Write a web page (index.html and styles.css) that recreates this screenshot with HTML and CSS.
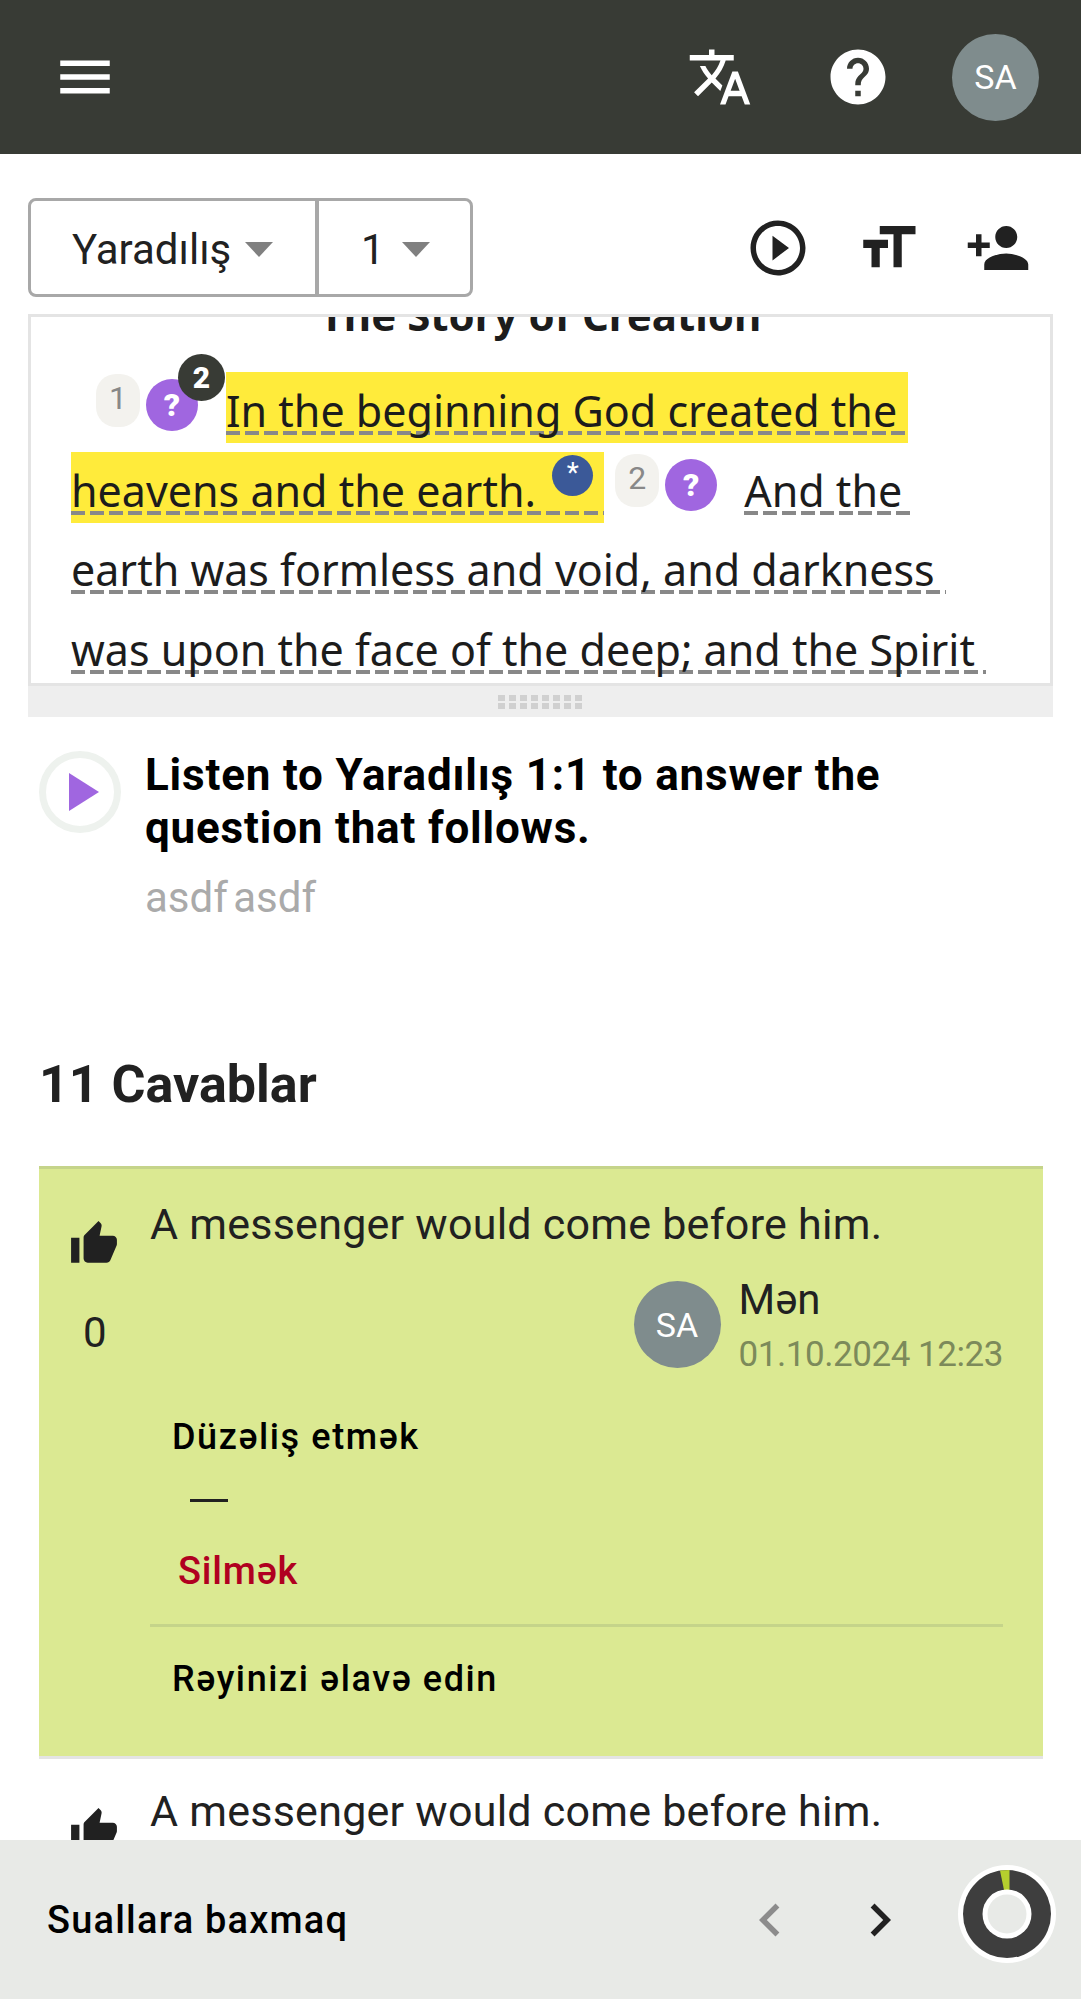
FILE: index.html
```html
<!DOCTYPE html>
<html lang="az">
<head>
  <meta charset="UTF-8">
  <meta name="viewport" content="width=device-width, initial-scale=1.0">
  <title>Yaradılış 1</title>
  <link rel="stylesheet" href="styles.css">
</head>
<body>
  <header class="topbar">
    <svg class="icon menu-icon" viewBox="0 0 24 24"><path d="M3 18h18v-2H3v2zm0-5h18v-2H3v2zm0-7v2h18V6H3z"/></svg>
    <svg class="icon translate-icon" viewBox="0 0 24 24"><path d="M12.87 15.07l-2.54-2.51.03-.03c1.74-1.94 2.98-4.17 3.71-6.53H17V4h-7V2H8v2H1v1.99h11.17C11.5 7.92 10.44 9.75 9 11.35 8.07 10.32 7.3 9.19 6.69 8h-2c.73 1.63 1.73 3.17 2.98 4.56l-5.09 5.02L4 19l5-5 3.11 3.11.76-2.04zM18.5 10h-2L12 22h2l1.12-3h4.75L21 22h2l-4.5-12zm-2.62 7l1.62-4.33L19.12 17h-3.24z"/></svg>
    <svg class="icon help-icon" viewBox="0 0 24 24"><path d="M12 2C6.48 2 2 6.48 2 12s4.48 10 10 10 10-4.48 10-10S17.52 2 12 2zm1 17h-2v-2h2v2zm2.07-7.75l-.9.92C13.45 12.9 13 13.5 13 15h-2v-.5c0-1.1.45-2.1 1.17-2.83l1.24-1.26c.37-.36.59-.86.59-1.41 0-1.1-.9-2-2-2s-2 .9-2 2H8c0-2.21 1.79-4 4-4s4 1.79 4 4c0 .88-.36 1.68-.93 2.25z"/></svg>
    <div class="avatar">SA</div>
  </header>

  <div class="toolbar">
    <div class="picker">
      <div class="picker-book">Yaradılış<span class="caret"></span></div>
      <div class="picker-chapter">1<span class="caret"></span></div>
    </div>
    <div class="tools">
      <svg class="icon" viewBox="0 0 24 24"><path d="M10 16.5l6-4.5-6-4.5v9zM12 2C6.48 2 2 6.48 2 12s4.48 10 10 10 10-4.48 10-10S17.52 2 12 2zm0 18c-4.41 0-8-3.59-8-8s3.59-8 8-8 8 3.59 8 8-3.59 8-8 8z"/></svg>
      <svg class="icon" viewBox="0 0 24 24"><path d="M9 4v3h5v12h3V7h5V4H9zm-6 8h3v7h3v-7h3V9H3v3z"/></svg>
      <svg class="icon" viewBox="0 0 24 24"><path d="M15 12c2.21 0 4-1.79 4-4s-1.79-4-4-4-4 1.79-4 4 1.79 4 4 4zm-9-2V7H4v3H1v2h3v3h2v-3h3v-2H6zm9 4c-2.67 0-8 1.34-8 4v2h16v-2c0-2.66-5.33-4-8-4z"/></svg>
    </div>
  </div>

  <section class="scripture">
    <h2 class="scripture-title">The Story of Creation</h2>
    <p class="verses">
      <span class="verse-num first">1</span><span class="q-mark">?<span class="q-count">2</span></span><span class="gap-a"></span><span class="word marked">In the beginning God created the&nbsp;</span><br>
      <span class="word marked">heavens and the earth.&nbsp;<span class="note">*</span></span><span class="verse-num">2</span><span class="q-mark">?</span><span class="gap-b"></span><span class="word">And the&nbsp;</span><br>
      <span class="word">earth was formless and void, and darkness&nbsp;</span><br>
      <span class="word">was upon the face of the deep; and the Spirit&nbsp;</span>
    </p>
  </section>
  <div class="resizer"><span class="grip"></span></div>

  <section class="question">
    <div class="audio-btn"><span class="audio-tri"></span></div>
    <div class="question-body">
      <h3>Listen to Yaradılış 1:1 to answer the question that follows.</h3>
      <p>asdf asdf</p>
    </div>
  </section>

  <h2 class="answers-head">11 Cavablar</h2>

  <article class="answer mine">
    <div class="vote">
      <svg class="thumb" viewBox="0 0 24 24"><path d="M1 21h4V9H1v12zm22-11c0-1.1-.9-2-2-2h-6.31l.95-4.57.03-.32c0-.41-.17-.79-.44-1.06L14.17 1 7.59 7.59C7.22 7.95 7 8.45 7 9v10c0 1.1.9 2 2 2h9c.83 0 1.54-.5 1.84-1.22l3.02-7.05c.09-.23.14-.47.14-.73v-2z"/></svg>
      <span class="vote-count">0</span>
    </div>
    <div class="answer-main">
      <p class="answer-text">A messenger would come before him.</p>
      <div class="byline">
        <div class="avatar">SA</div>
        <div>
          <div class="by-name">Mən</div>
          <div class="by-date">01.10.2024 12:23</div>
        </div>
      </div>
      <div class="action edit">Düzəliş etmək</div>
      <div class="dash"></div>
      <div class="action delete">Silmək</div>
      <div class="action comment">Rəyinizi əlavə edin</div>
    </div>
  </article>

  <article class="answer">
    <div class="vote">
      <svg class="thumb" viewBox="0 0 24 24"><path d="M1 21h4V9H1v12zm22-11c0-1.1-.9-2-2-2h-6.31l.95-4.57.03-.32c0-.41-.17-.79-.44-1.06L14.17 1 7.59 7.59C7.22 7.95 7 8.45 7 9v10c0 1.1.9 2 2 2h9c.83 0 1.54-.5 1.84-1.22l3.02-7.05c.09-.23.14-.47.14-.73v-2z"/></svg>
    </div>
    <div class="answer-main">
      <p class="answer-text">A messenger would come before him.</p>
    </div>
  </article>

  <footer class="bottombar">
    <span class="bottom-label">Suallara baxmaq</span>
    <svg class="icon chevron disabled" viewBox="0 0 24 24"><path d="M15.41 7.41L14 6l-6 6 6 6 1.41-1.41L10.83 12z"/></svg>
    <svg class="icon chevron" viewBox="0 0 24 24"><path d="M10 6L8.59 7.41 13.17 12l-4.58 4.59L10 18l6-6z"/></svg>
    <svg class="progress" viewBox="0 0 98 98">
      <circle cx="49" cy="49" r="49" fill="#fff"/>
      <circle cx="49" cy="49" r="44" fill="#3e3e3e"/>
      <path d="M42 5.500 L51.500 5 L51.500 25 L46 25 Z" fill="#b5cf2e"/>
      <circle cx="49" cy="49" r="24.500" fill="#fff"/>
      <circle cx="49" cy="49" r="19.500" fill="#e8eae7"/>
    </svg>
  </footer>
</body>
</html>
```

FILE: styles.css
```css
html, body {
  margin: 0;
  padding: 0;
}

body {
  position: relative;
  width: 1081px;
  height: 1999px;
  overflow: hidden;
  background: #fff;
  color: #212121;
  font-family: Roboto, sans-serif;
}

h2, h3, p {
  margin: 0;
}

.icon {
  width: 66px;
  height: 66px;
  fill: currentColor;
  flex: none;
}

.avatar {
  width: 87px;
  height: 87px;
  border-radius: 50%;
  background: #7f8c8d;
  color: #fff;
  font-size: 34px;
  display: flex;
  align-items: center;
  justify-content: center;
  flex: none;
}

/* top bar */
.topbar {
  height: 154px;
  background: #383b35;
  color: #fff;
  display: flex;
  align-items: center;
  padding: 0 42px 0 52px;
  box-sizing: border-box;
}
.translate-icon { margin-left: auto; }
.help-icon { margin-left: 72px; }
.topbar .avatar { margin-left: 61px; }

/* book + chapter */
.toolbar {
  display: flex;
  align-items: center;
  justify-content: space-between;
  padding: 44px 50px 0 28px;
  height: 99px;
}
.picker {
  display: flex;
  height: 99px;
  box-sizing: border-box;
  border: 3px solid #a8a8a8;
  border-radius: 8px;
  font-size: 42px;
}
.picker-book, .picker-chapter {
  display: flex;
  align-items: center;
  box-sizing: border-box;
  padding-top: 3px;
}
.picker-book {
  width: 288px;
  padding-left: 41px;
  border-right: 4px solid #a8a8a8;
}
.picker-chapter {
  width: 151px;
  padding-left: 42px;
}
.caret {
  border-left: 14px solid transparent;
  border-right: 14px solid transparent;
  border-top: 15px solid #808080;
  margin-left: 14px;
}
.picker-chapter .caret { margin-left: 17px; }
.tools {
  display: flex;
  gap: 44px;
}

/* scripture panel */
.scripture {
  margin: 17px 28px 0;
  height: 372px;
  box-sizing: border-box;
  border: 3px solid #e4e4e4;
  overflow: hidden;
  background: #fff;
  font-family: "Noto Sans", sans-serif;
  font-size: 43px;
  color: #1c1c1c;
}
.scripture-title {
  font-size: 42px;
  font-weight: 700;
  text-align: center;
  line-height: 50px;
  margin-top: -27px;
  height: 50px;
}
.verses {
  line-height: 79.500px;
  padding-left: 40px;
  margin-top: 31px;
  white-space: nowrap;
}
.word {
  padding-bottom: 3px;
  background: repeating-linear-gradient(90deg, #888 0 14px, transparent 14px 19px) 0 calc(100% - 8px) / 100% 4px no-repeat;
}
.marked {
  background: repeating-linear-gradient(90deg, #888 0 14px, transparent 14px 19px) 0 calc(100% - 8px) / 100% 4px no-repeat, #ffeb3b;
  padding-top: 9px;
}
.verse-num {
  display: inline-block;
  width: 44px;
  height: 53px;
  line-height: 48px;
  text-align: center;
  border-radius: 20px;
  background: #f3f2ee;
  color: #888;
  font-family: Roboto, sans-serif;
  font-size: 32px;
  vertical-align: 18px;
  margin-left: 11px;
}
.verse-num.first { margin-left: 25px; }
.q-mark {
  position: relative;
  display: inline-block;
  width: 52px;
  height: 52px;
  line-height: 52px;
  margin-left: 6px;
  border-radius: 50%;
  background: #a066e0;
  color: #fff;
  font-family: Roboto, sans-serif;
  font-weight: 900;
  font-size: 32px;
  text-align: center;
  vertical-align: 11px;
}
.q-count {
  position: absolute;
  top: -25px;
  left: 32px;
  width: 47px;
  height: 47px;
  line-height: 47px;
  border-radius: 50%;
  background: #383b35;
  font-size: 30px;
}
.gap-a { display: inline-block; width: 28px; }
.gap-b { display: inline-block; width: 27px; }
.note {
  display: inline-block;
  width: 41px;
  height: 41px;
  line-height: 36px;
  margin: 0 11px 0 5px;
  border-radius: 50%;
  background: #3b5998;
  color: #fff;
  font-family: Roboto, sans-serif;
  font-size: 28px;
  text-align: center;
  vertical-align: 25px;
}
.resizer {
  margin: 0 28px;
  height: 31px;
  background: #eee;
  display: flex;
  align-items: center;
  justify-content: center;
}
.grip {
  width: 85px;
  height: 14px;
  background:
    linear-gradient(#eee, #eee) center / 100% 2px no-repeat,
    repeating-linear-gradient(90deg, #d0d0d0 0 7px, transparent 7px 11px);
}

/* question */
.question {
  display: flex;
  padding: 32px 28px 0 39px;
}
.audio-btn {
  width: 82px;
  height: 82px;
  box-sizing: border-box;
  border: 7px solid #eef2ee;
  border-radius: 50%;
  display: flex;
  align-items: center;
  padding-left: 23px;
  margin-top: 2px;
  flex: none;
}
.audio-tri {
  border-left: 30px solid #a066e0;
  border-top: 19px solid transparent;
  border-bottom: 19px solid transparent;
}
.question-body {
  margin-left: 24px;
}
.question-body h3 {
  font-size: 44px;
  line-height: 53px;
  font-weight: 700;
  letter-spacing: .8px;
  color: #000;
}
.question-body p {
  font-size: 42px;
  line-height: 50px;
  word-spacing: -5px;
  color: #aaa;
  margin-top: 18px;
}

.answers-head {
  font-size: 52px;
  font-weight: 700;
  line-height: 60px;
  margin: 132px 0 0 39px;
}

/* answers */
.answer {
  display: flex;
  margin: 51px 38px 0 39px;
  padding: 0 40px 0 0;
  box-sizing: border-box;
}
.answer + .answer {
  margin-top: 0;
  padding-top: 27px;
}
.answer.mine {
  background: #dbe992;
  border-top: 3px solid #c5d48a;
  border-bottom: 3px solid #e4e4e4;
  height: 593px;
  padding-top: 30px;
}
.vote {
  width: 111px;
  flex: none;
  display: flex;
  flex-direction: column;
  align-items: flex-start;
  padding-left: 30px;
  box-sizing: border-box;
}
.thumb {
  width: 50px;
  height: 50px;
  fill: currentColor;
  margin-top: 20px;
}
.vote-count {
  font-size: 42px;
  line-height: 50px;
  margin: 39px 0 0 14px;
}
.answer-main {
  flex: 1;
}
.answer-text {
  font-size: 43px;
  letter-spacing: .25px;
  line-height: 50px;
}
.byline {
  display: flex;
  justify-content: flex-end;
  gap: 18px;
  margin-top: 36px;
}
.byline > div:last-child {
  margin-top: -10px;
}
.byline .avatar {
  margin-top: -4px;
}
.by-name {
  font-size: 42px;
  line-height: 50px;
}
.by-date {
  font-size: 35px;
  letter-spacing: -.45px;
  line-height: 50px;
  color: #7c8a5a;
  margin-top: 5px;
}
.action {
  font-size: 36px;
  font-weight: 500;
  letter-spacing: 1.6px;
  line-height: 48px;
  color: #000;
  padding-left: 22px;
}
.edit { margin-top: 33px; }
.dash {
  width: 38px;
  height: 3px;
  background: #212121;
  margin: 38px 0 0 40px;
}
.delete {
  color: #b00020;
  font-size: 38px;
  letter-spacing: .8px;
  padding-left: 28px;
  margin-top: 45px;
}
.comment {
  border-top: 3px solid #c5d48a;
  margin-top: 29px;
  padding-top: 28px;
}

/* bottom bar */
.bottombar {
  position: absolute;
  left: 0;
  right: 0;
  bottom: 0;
  height: 159px;
  box-sizing: border-box;
  background: #e8eae7;
  display: flex;
  align-items: center;
  padding: 0 25px 0 47px;
}
.bottom-label {
  font-size: 38px;
  font-weight: 500;
  letter-spacing: 1.2px;
  color: #000;
  margin-right: auto;
}
.chevron + .chevron { margin-left: 44px; }
.chevron.disabled { color: #8c8c8c; }
.progress {
  width: 98px;
  height: 98px;
  margin: 0 0 12px 45px;
}
```
